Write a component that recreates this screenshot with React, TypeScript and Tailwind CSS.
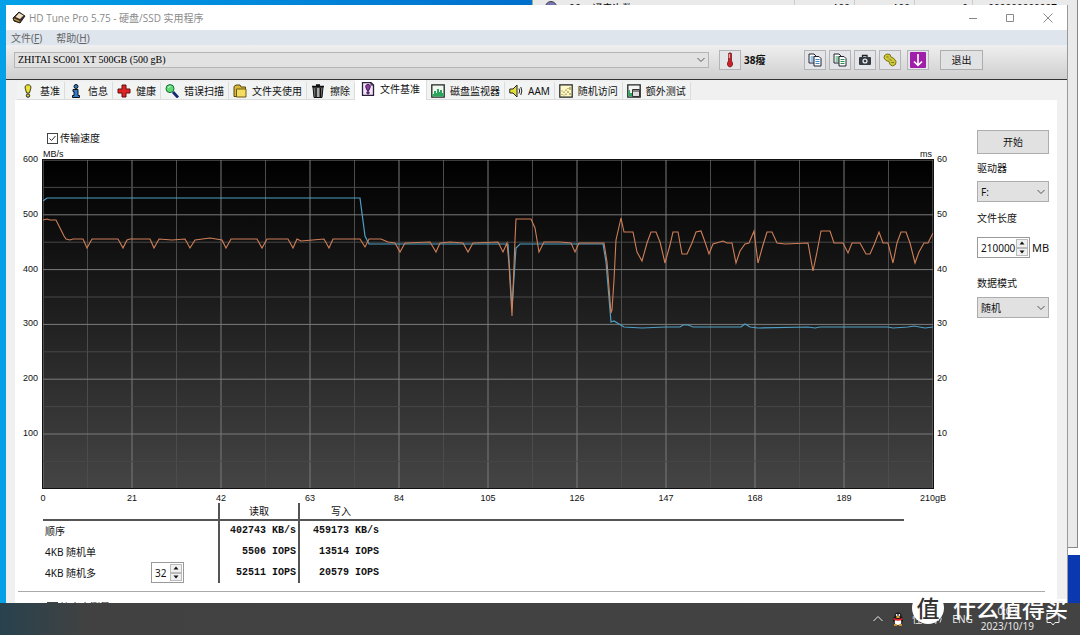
import type { ReactNode } from "react";

const WRITE_POINTS =
  "43,220 47,219 50,220 56,220 60,228 64,236 66,239 70,240 73,239 83,239 87,248 92,239 118,239 123,248 127,240 130,239 150,239 154,248 159,239 172,240 185,239 190,248 195,240 210,238 222,240 226,248 231,239 257,239 262,248 267,239 288,239 293,248 297,239 301,241 324,239 329,248 333,239 360,239 365,247 369,239 381,239 388,242 395,243 400,252 405,243 430,242 436,252 440,243 450,242 463,243 468,252 473,243 498,242 503,252 507,243 509,264 512,316 515,240 516,219 531,219 535,228 539,252 544,242 560,242 571,243 575,252 579,243 604,243 607,262 611,313 612,310 614,280 616,240 621,218 624,232 633,232 637,252 642,261 647,243 651,232 656,232 660,242 665,263 670,245 673,232 678,232 682,254 687,254 692,243 696,232 701,231 705,242 709,254 713,244 723,241 727,243 732,243 736,263 740,251 745,244 749,243 754,231 758,263 763,245 767,232 772,232 777,243 785,244 808,243 813,271 817,252 821,231 830,231 834,243 843,243 848,253 852,243 860,243 866,254 870,254 874,245 879,232 883,243 888,243 893,263 897,243 901,232 906,232 910,243 915,263 919,252 924,243 928,243 933,233";

const READ_POINTS =
  "43,201 47,198 360,198 365,236 369,244 508,244 512,308 516,248 520,244 603,244 606,262 611,322 614,321 619,324 624,327 642,328 665,327 680,327 683,325 688,325 693,327 741,327 745,324 750,327 758,328 808,327 815,328 820,327 888,327 893,328 908,327 914,326 925,328 933,327";

const GRID_X = Array.from({ length: 21 }, (_, i) => 43 + i * 44.5);
const GRID_Y = Array.from({ length: 12 }, (_, i) => 160 + i * 27.4);

function Plot() {
  return (
    <svg
      className="block w-full h-[330px]"
      viewBox="42 159 892 330"
      preserveAspectRatio="none"
    >
      <defs>
        <linearGradient id="plot-bg" x1="0" y1="0" x2="0" y2="1">
          <stop offset="0" stopColor="#000" />
          <stop offset="0.4" stopColor="#1a1a1a" />
          <stop offset="1" stopColor="#454545" />
        </linearGradient>
      </defs>
      <rect x="42" y="159" width="892" height="330" fill="url(#plot-bg)" />
      {GRID_X.map((x, i) => (
        <line key={x} x1={x} x2={x} y1="159" y2="489" stroke={i % 2 ? "#4c4c4c" : "#7b7b7b"} />
      ))}
      {GRID_Y.map((y, i) => (
        <line key={y} x1="42" x2="934" y1={y} y2={y} stroke={i % 2 ? "#484848" : "#7b7b7b"} />
      ))}
      <polyline points={READ_POINTS} fill="none" stroke="#4f9fc4" strokeWidth="1.2" />
      <polyline points={WRITE_POINTS} fill="none" stroke="#cf7f58" strokeWidth="1.1" />
      <path d="M42 159.5H934M42.5 159V489M42 488.5H934M933.5 159V489" stroke="#111" fill="none" />
    </svg>
  );
}

function Chevron() {
  return (
    <svg className="pointer-events-none w-2 h-2 -ml-3 mr-1 shrink-0" viewBox="0 0 8 8" fill="none" stroke="#555">
      <path d="M0.5 2L4 5.5L7.5 2" />
    </svg>
  );
}

const tabIcons: Record<string, ReactNode> = {
  bulb: (
    <>
      <path d="M7 0.8C4.4 0.8 3.8 2.5 4.2 4.3L5.6 9H8.4L9.8 4.3C10.2 2.5 9.6 0.8 7 0.8Z" fill="#e9e23c" stroke="#44400f" />
      <circle cx="7" cy="11.6" r="1.7" fill="#d8d02c" stroke="#222" />
    </>
  ),
  info: (
    <>
      <circle cx="7" cy="2.5" r="2" fill="#2e7bd0" stroke="#111" />
      <path d="M4 5.5H9V11.5H10.5V13.5H3.5V11.5H5V7.5H4Z" fill="#2e7bd0" stroke="#111" />
    </>
  ),
  cross: <path d="M5 1H9V5H13V9H9V13H5V9H1V5H5Z" fill="#e02424" stroke="#5e1010" />,
  search: (
    <>
      <path d="M8 8L13 13.5" stroke="#142a70" strokeWidth="2.8" />
      <circle cx="5" cy="4.6" r="4" fill="#5fdc74" stroke="#1a6a3a" />
      <path d="M3 4Q3.5 2.3 5.5 2.3" stroke="#d8ffe0" fill="none" />
    </>
  ),
  folder: (
    <>
      <path d="M1 12.5V2.5L3 1H7L8 3H12.5V12.5Z" fill="#d8b93a" stroke="#54460f" />
      <path d="M3.5 5H13V13H3.5Z" fill="#f5dc62" stroke="#6a5813" />
    </>
  ),
  bin: (
    <>
      <path d="M2 3H12L11 13.5H3Z" fill="#777" stroke="#111" />
      <path d="M1 2.5H13M5 1H9" stroke="#111" strokeWidth="1.6" />
      <path d="M5 4V13M9.5 4V13" stroke="#111" strokeWidth="1.3" />
      <path d="M7 4V13" stroke="#ddd" />
    </>
  ),
  file: (
    <>
      <path d="M1.5 0.7H10L12.5 3V13.3H1.5Z" fill="#efe6f6" stroke="#2e1d3d" strokeWidth="1.3" />
      <path d="M10 0.7V3H12.5" stroke="#2e1d3d" fill="none" />
      <path d="M7 2.5C4.5 2.5 4.5 4.5 5 5.7L6.2 8.5H7.8L9 5.7C9.5 4.5 9.5 2.5 7 2.5Z" fill="#8c3aa5" stroke="#41144f" />
      <circle cx="7" cy="10.8" r="1.2" fill="#8c3aa5" stroke="#41144f" />
    </>
  ),
  monitor: (
    <>
      <path d="M0.8 0.8H13.2V13.2H0.8Z" fill="#eef8ee" stroke="#222" strokeWidth="1.3" />
      <path d="M1.5 12.5V10H3V7H5V9H6V5H8V8H9V6H11V9H12.5V12.5Z" fill="#2ba75c" />
    </>
  ),
  sound: (
    <>
      <path d="M0.8 5H4L8 1V13L4 9H0.8Z" fill="#e3df3a" stroke="#222" />
      <path d="M10 4.5Q11.2 7 10 9.5M11.8 3Q13.8 7 11.8 11" stroke="#222" fill="none" />
    </>
  ),
  scatter: (
    <>
      <path d="M0.8 0.8H13.2V13.2H0.8Z" fill="#fbf9cd" stroke="#222" strokeWidth="1.2" />
      <path d="M3 11V10M5 9V7.5M3 7.5V6.5M7 11V9.5M7 7V5.5M9 9V7M11 11V9M11 6V3M9 5V4M5 11.5V10.8" stroke="#a58a25" strokeWidth="1.2" />
    </>
  ),
  extra: (
    <>
      <path d="M0.8 0.8H13.2V13.2H0.8Z" fill="#f4f4f4" stroke="#222" strokeWidth="1.3" />
      <path d="M1.5 12.5V6H3V9H5V12.5Z" fill="#2ba75c" />
      <path d="M5.5 5.5H12.5V12.5H5.5Z" fill="#ddd" stroke="#333" />
      <path d="M6 7H12" stroke="#333" />
    </>
  ),
};

const tabs = [
  { icon: "bulb", label: "基准" },
  { icon: "info", label: "信息" },
  { icon: "cross", label: "健康" },
  { icon: "search", label: "错误扫描" },
  { icon: "folder", label: "文件夹使用" },
  { icon: "bin", label: "擦除" },
  { icon: "file", label: "文件基准", active: true },
  { icon: "monitor", label: "磁盘监视器" },
  { icon: "sound", label: "AAM" },
  { icon: "scatter", label: "随机访问" },
  { icon: "extra", label: "额外测试" },
];

function Tabs() {
  return (
    <div className="flex items-start h-5 shrink-0 pl-[11px] bg-[#f0f0f0]" role="tablist">
      {tabs.map((tab) => (
        <button
          key={tab.label}
          role="tab"
          aria-selected={!!tab.active}
          className={
            tab.active
              ? "flex items-center gap-[5px] h-5 pb-0.5 px-1.5 bg-white border-r border-[#ddd] shrink-0"
              : "flex items-center gap-[5px] h-[18px] mt-0.5 px-1 bg-[#f2f3f3] border-r border-b border-[#dcdcdc] shrink-0"
          }
        >
          <svg className="w-3.5 h-3.5" viewBox="0 0 14 14" fill="none">
            {tabIcons[tab.icon]}
          </svg>
          {tab.label}
        </button>
      ))}
    </div>
  );
}

function CopyIcon({ color }: { color: string }) {
  return (
    <svg className="w-3.5 h-3.5" viewBox="0 0 14 14" fill="none">
      <path d="M1 1H6L8 3V10H1Z" fill="#fff" stroke="#223" />
      <path d="M2.5 4H6M2.5 6H6M2.5 8H6" stroke={color} />
      <path d="M6 3.5H11L13 5.5V13H6Z" fill="#fff" stroke="#223" />
      <path d="M7.5 6.5H11.5M7.5 8.5H11.5M7.5 10.5H11.5" stroke={color} strokeWidth="1.2" />
    </svg>
  );
}

function ToolButton({ label, children }: { label: string; children: ReactNode }) {
  return (
    <button
      aria-label={label}
      className="flex items-center justify-center w-[22px] h-5 bg-[#e4e5e8] border border-[#b4b4b8]"
    >
      {children}
    </button>
  );
}

function Toolbar() {
  return (
    <div className="flex items-center h-[35px] shrink-0 pl-2 pr-[84px] pb-1 border-b border-[#333] bg-linear-to-b from-[#efefef] to-[#d0cfcf]">
      <div className="flex items-center flex-1 min-w-0">
        <select
          aria-label="硬盘"
          className="appearance-none w-full h-4 pl-[3px] border border-[#b5b5b5] bg-[#e2e2e2] font-['Liberation_Serif','Noto_Sans_CJK_SC',serif] text-[10px] leading-3 text-black"
        >
          <option>ZHITAI SC001 XT 500GB (500 gB)</option>
        </select>
        <Chevron />
      </div>
      <div className="flex items-center gap-[3px] ml-2.5 w-[85px]">
        <ToolButton label="温度">
          <svg className="w-3.5 h-4" viewBox="0 0 14 16" fill="none">
            <path d="M5.5 1.5Q7 0 8.5 1.5V9Q10 10.5 9.5 13Q8.5 15 7 15Q5.5 15 4.5 13Q4 10.5 5.5 9Z" fill="#cf2027" stroke="#5c1115" strokeWidth="0.7" />
            <path d="M6.3 2V6" stroke="#f7c5c7" />
          </svg>
        </ToolButton>
        <span className="font-bold">38癈</span>
      </div>
      <div className="flex items-center gap-[3px]">
        <ToolButton label="复制文本">
          <CopyIcon color="#3c86c6" />
        </ToolButton>
        <ToolButton label="复制图像">
          <CopyIcon color="#25954c" />
        </ToolButton>
        <ToolButton label="截图">
          <svg className="w-3.5 h-3.5" viewBox="0 0 14 14" fill="none">
            <path d="M4.5 4V2.5H9V4" stroke="#222" strokeWidth="1.3" />
            <rect x="1" y="4" width="12" height="8" rx="1" fill="#333a42" />
            <circle cx="7" cy="8" r="2.6" fill="#e5e9ee" />
            <circle cx="7" cy="8" r="1.3" fill="#333a42" />
          </svg>
        </ToolButton>
        <ToolButton label="选项">
          <svg className="w-3.5 h-3.5" viewBox="0 0 14 14" fill="none">
            <path d="M4 1L7 1.5L8 4L11 5.5L13 8.5L12.5 11.5L9.5 13L7 11.5L6 8.5L3 7.5L1 5L1.5 2.5Z" fill="#cfc937" stroke="#77721b" />
            <path d="M3.5 4H5.5M8.5 9.5H11M6 5.5L8.5 8" stroke="#77721b" />
          </svg>
        </ToolButton>
      </div>
      <div className="flex items-center ml-1.5 gap-[11px]">
        <ToolButton label="保存">
          <svg className="w-4 h-4" viewBox="0 0 16 16" fill="none">
            <rect width="16" height="16" rx="1" fill="#a01fa8" />
            <path d="M8 2V13M4 9.5L8 13.3L12 9.5" stroke="#fff" strokeWidth="1.6" />
          </svg>
        </ToolButton>
        <button className="w-[43px] h-5 border border-[#adadad] bg-[#e1e2e4]">退出</button>
      </div>
    </div>
  );
}

function Spinner({ label, value, width }: { label: string; value: string; width: string }) {
  return (
    <div className={`flex h-[21px] p-px border border-[#999] bg-white ${width}`}>
      <input aria-label={label} defaultValue={value} className="min-w-0 flex-1 pl-0.5 leading-4 outline-none" />
      <div className="flex flex-col w-3 shrink-0">
        <button aria-label="增加" className="flex flex-1 items-center justify-center border border-[#bbb] bg-[#f0f0f0]">
          <svg className="w-1.5 h-1" viewBox="0 0 6 4">
            <path d="M3 0.5L5.5 3.5H0.5Z" fill="#111" />
          </svg>
        </button>
        <button aria-label="减少" className="flex flex-1 items-center justify-center border border-[#bbb] bg-[#f0f0f0]">
          <svg className="w-1.5 h-1" viewBox="0 0 6 4">
            <path d="M3 3.5L0.5 0.5H5.5Z" fill="#111" />
          </svg>
        </button>
      </div>
    </div>
  );
}

function CheckBox({ label, checked }: { label: string; checked?: boolean }) {
  return (
    <label className="flex items-center gap-0.5 h-3 leading-3">
      <span className="grid w-[11px] h-[11px]">
        <input
          type="checkbox"
          defaultChecked={checked}
          className="peer col-start-1 row-start-1 appearance-none border border-[#444] bg-white"
        />
        <svg
          className="pointer-events-none col-start-1 row-start-1 hidden peer-checked:block"
          viewBox="0 0 11 11"
          fill="none"
          stroke="#333"
        >
          <path d="M2.5 5.5L4.5 7.5L8.5 3" />
        </svg>
      </span>
      {label}
    </label>
  );
}

const X_LABELS = ["0", "21", "42", "63", "84", "105", "126", "147", "168", "189", "210gB"];

function Chart() {
  return (
    <div className="text-[9px] leading-[10px] font-['Liberation_Sans',sans-serif]">
      <div className="flex justify-between pl-7 pr-4">
        <span>MB/s</span>
        <span>ms</span>
      </div>
      <div className="flex">
        <div className="flex flex-col justify-between w-[27px] h-[340px] -mt-[5px] pb-14 pr-1 text-right">
          {[600, 500, 400, 300, 200, 100].map((v) => (
            <span key={v}>{v}</span>
          ))}
        </div>
        <div className="flex-1 min-w-0">
          <Plot />
          <div className="flex justify-between px-px mt-1">
            {X_LABELS.map((v) => (
              <span key={v} className="flex justify-center w-0">
                {v}
              </span>
            ))}
          </div>
        </div>
        <div className="flex flex-col justify-between w-3.5 h-[340px] -mt-[5px] pb-14 pl-[3px]">
          {[60, 50, 40, 30, 20, 10].map((v) => (
            <span key={v}>{v}</span>
          ))}
        </div>
      </div>
    </div>
  );
}

const results = [
  { name: "顺序", read: "402743 KB/s", write: "459173 KB/s" },
  { name: "4KB 随机单", read: "5506 IOPS", write: "13514 IOPS" },
  { name: "4KB 随机多", read: "52511 IOPS", write: "20579 IOPS", depth: "32" },
];

function ResultTable() {
  return (
    <div className="pl-7 pr-11">
      <table className="w-full table-fixed border-collapse">
        <colgroup>
          <col className="w-[176px]" />
          <col className="w-[80px]" />
          <col className="w-[83px]" />
          <col />
        </colgroup>
        <thead>
          <tr className="h-[17px] border-b-2 border-[#555]">
            <td />
            <th scope="col" className="border-x-2 border-x-[#555] font-normal">读取</th>
            <th scope="col" className="font-normal">写入</th>
            <td />
          </tr>
        </thead>
        <tbody>
          {results.map((row) => (
            <tr key={row.name} className="h-[21px]">
              <th scope="row" className="p-0 pl-0.5 font-normal text-left">
                <div className="flex items-center justify-between pr-[34px]">
                  {row.name}
                  {row.depth && <Spinner label="队列深度" value={row.depth} width="w-[33px]" />}
                </div>
              </th>
              <td className="p-0 pr-0.5 border-x-2 border-[#555] text-right font-bold font-['Liberation_Mono',monospace] whitespace-nowrap">
                {row.read}
              </td>
              <td className="p-0 pr-[3px] text-right font-bold font-['Liberation_Mono',monospace] whitespace-nowrap">
                {row.write}
              </td>
              <td />
            </tr>
          ))}
        </tbody>
      </table>
    </div>
  );
}

function DropDown({ id, value }: { id: string; value: string }) {
  return (
    <div className="flex items-center">
      <select
        id={id}
        className="appearance-none w-full h-[21px] pl-[3px] border border-[#adadad] bg-[#e1e1e1] leading-4"
      >
        <option>{value}</option>
      </select>
      <Chevron />
    </div>
  );
}

function SidePanel() {
  return (
    <div className="flex flex-col w-[72px] shrink-0 mt-[30px] leading-3">
      <button className="h-6 border border-[#adadad] bg-[#e1e1e1]">开始</button>
      <label htmlFor="drive" className="mt-2 mb-[7px]">驱动器</label>
      <DropDown id="drive" value="F:" />
      <span className="mt-2.5 mb-[13px]">文件长度</span>
      <div className="flex items-center gap-0.5">
        <Spinner label="文件长度" value="210000" width="w-[53px]" />
        <span className="text-[11px]">MB</span>
      </div>
      <label htmlFor="pattern" className="mt-[19px] mb-2">数据模式</label>
      <DropDown id="pattern" value="随机" />
    </div>
  );
}

function TitleBar() {
  return (
    <div className="flex items-center h-[25px] shrink-0 pl-1.5 bg-white text-[#8b8b8b]">
      <svg className="w-3.5 h-3.5" viewBox="0 0 14 14" fill="none">
        <path d="M1 7L7 1L13 5L8 12L2 10Z" fill="#3d3129" stroke="#222" />
        <path d="M3.5 6L7 2L11.5 4.5L8 8Z" fill="#f1dfc0" />
        <path d="M2 8L7.5 10.5" stroke="#d2a33c" strokeWidth="1.3" />
      </svg>
      <h1 className="flex-1 pl-[3px] font-['Open_Sans','Noto_Sans_CJK_SC',sans-serif]">HD Tune Pro 5.75 - 硬盘/SSD 实用程序</h1>
      <button aria-label="最小化" className="flex justify-center w-[37px]">
        <svg className="w-2.5 h-2.5" viewBox="0 0 10 10" stroke="#888">
          <path d="M1 5.5H9" />
        </svg>
      </button>
      <button aria-label="最大化" className="flex justify-center w-[38px]">
        <svg className="w-2.5 h-2.5" viewBox="0 0 10 10" stroke="#888" fill="none">
          <path d="M1.5 1.5H8.5V8.5H1.5Z" />
        </svg>
      </button>
      <button aria-label="关闭" className="flex justify-center w-[38px]">
        <svg className="w-2.5 h-2.5" viewBox="0 0 10 10" stroke="#888">
          <path d="M0.5 0.5L9.5 9.5M9.5 0.5L0.5 9.5" />
        </svg>
      </button>
    </div>
  );
}

function MenuBar() {
  return (
    <div className="flex items-center gap-3.5 h-[15px] shrink-0 pl-[5px] bg-[#dee5ed] text-[#666]">
      <button>文件(<u>F</u>)</button>
      <button>帮助(<u>H</u>)</button>
    </div>
  );
}

// The SMART window that sits behind; only its top and right edges stay visible
function BackWindow() {
  return (
    <div className="absolute top-0 right-0 left-[532px] h-[555px] bg-white border-l border-[#8fb88f]">
      <div className="flex h-[548px] mr-0.5 border-r border-b border-[#888] bg-[#eaeaea]">
        <div className="flex h-5 w-full leading-4 text-black">
          <span className="w-3 h-3 ml-3 mt-px rounded-full bg-[#7774b8] border border-[#444]" />
          <span className="pl-3">06</span>
          <span className="pl-3 flex-1">通电次数</span>
          <span className="w-[60px] pr-1 text-right border-l border-[#ccc]">100</span>
          <span className="w-[60px] pr-1 text-right border-l border-[#ccc]">100</span>
          <span className="w-[58px] pr-1 text-right border-l border-[#ccc]">0</span>
          <span className="w-[105px] pr-5 text-right border-l border-[#ccc]">000000000007</span>
        </div>
      </div>
    </div>
  );
}

function Taskbar() {
  return (
    <div className="relative flex items-center justify-end h-8 shrink-0 pr-5 text-[#e8e8e8] bg-linear-to-r from-[#27424e] via-[#414141] via-[8%] to-[#434343]">
      <svg className="w-2.5 h-2.5 mr-2" viewBox="0 0 10 10" fill="none" stroke="#eee">
        <path d="M0.5 7L5 2.5L9.5 7" />
      </svg>
      <svg className="w-3.5 h-3.5 mr-[7px]" viewBox="0 0 14 14">
        <ellipse cx="7" cy="8" rx="5" ry="5" fill="#181818" />
        <circle cx="7" cy="4" r="3.5" fill="#181818" />
        <ellipse cx="7" cy="10" rx="3.3" ry="3" fill="#fff" />
        <ellipse cx="7" cy="5" rx="2" ry="1" fill="#eea92c" />
        <circle cx="5.7" cy="3" r="0.9" fill="#fff" />
        <circle cx="8.3" cy="3" r="0.9" fill="#fff" />
        <path d="M2.5 6.8Q7 9 11.5 6.8" stroke="#d9272d" strokeWidth="1.8" fill="none" />
        <path d="M3 13H6M8 13H11" stroke="#eea92c" strokeWidth="1.5" />
      </svg>
      <span className="mr-2">性</span>
      <svg className="w-3.5 h-3.5 mr-2" viewBox="0 0 14 14" fill="none" stroke="#ddd">
        <path d="M1 5H3L6 2.5V11.5L3 9H1ZM8 5Q9.5 7 8 9M10 3.5Q12.5 7 10 10.5" />
      </svg>
      <span className="mr-2">ENG</span>
      <div className="flex flex-col items-center mr-3 leading-[15px]">
        <time>0:03</time>
        <time>2023/10/19</time>
      </div>
      <svg className="w-3.5 h-3.5" viewBox="0 0 14 14" fill="none" stroke="#eee">
        <path d="M1 1.5H13V10.5H9L7 13L5 10.5H1Z" />
      </svg>
      <div className="absolute right-3 bottom-[11px] flex items-center gap-[9px] text-white">
        <span className="flex items-center justify-center w-8 h-8 rounded-full bg-white text-[#333] text-[23px] font-medium">值</span>
        <span className="text-[23px] leading-8 font-medium">什么值得买</span>
      </div>
    </div>
  );
}

export default function App() {
  return (
    <div className="relative flex flex-col h-screen overflow-hidden bg-linear-to-r from-[#04a1e8] to-[#0a38b0] font-['Noto_Sans','Noto_Sans_CJK_SC',sans-serif] text-[10px] leading-[14px] text-[#111]">
      <BackWindow />
      <div className="relative flex flex-col flex-1 min-h-0 overflow-hidden mt-[5px] ml-1.5 mr-3 bg-[#f0f0f0] border-r border-[#999]">
        <TitleBar />
        <MenuBar />
        <Toolbar />
        <Tabs />
        <main className="flex-1 ml-[9px] mr-2.5 bg-white">
          <div className="flex justify-between pr-2">
            <div className="flex-1 min-w-0 mr-[29px]">
              <div className="pt-8 pl-8 pb-[5px]">
                <CheckBox label="传输速度" checked />
              </div>
              <Chart />
              <ResultTable />
            </div>
            <SidePanel />
          </div>
          <div className="mt-2 ml-[3px] mr-3 pt-[9px] pl-[29px] border-t border-[#aaa]">
            <CheckBox label="块大小测量" />
          </div>
        </main>
      </div>
      <Taskbar />
    </div>
  );
}
